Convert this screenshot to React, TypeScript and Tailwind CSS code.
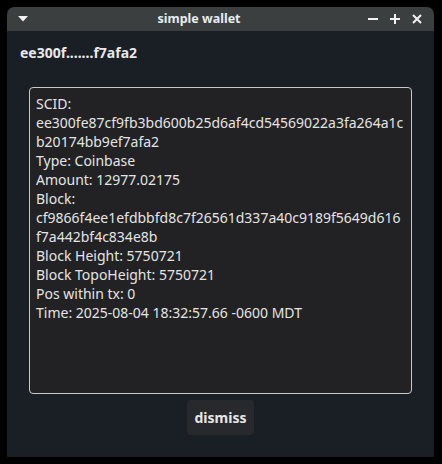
import React from "react";

const lines = [
  "SCID:",
  "ee300fe87cf9fb3bd600b25d6af4cd54569022a3fa264a1c",
  "b20174bb9ef7afa2",
  "Type: Coinbase",
  "Amount: 12977.02175",
  "Block:",
  "cf9866f4ee1efdbbfd8c7f26561d337a40c9189f5649d616",
  "f7a442bf4c834e8b",
  "Block Height: 5750721",
  "Block TopoHeight: 5750721",
  "Pos within tx: 0",
  "Time: 2025-08-04 18:32:57.66 -0600 MDT",
];

function TitleBar() {
  return (
    <div className="flex h-[24px] items-center rounded-t-[7px] bg-[#3b3f3f] px-[10px] text-[#e6ecf2]">
      <div className="flex w-[14px] items-center pl-[1px]">
        <svg width="10" height="6" viewBox="0 0 10 6">
          <path d="M0 0h10L5 5.5z" fill="#f2f2f2" />
        </svg>
      </div>
      <div className="flex-1 text-center text-[12.5px] font-bold leading-none">
        simple wallet
      </div>
      <div className="flex items-center gap-[10px] pr-[1px]">
        <svg width="12" height="12" viewBox="0 0 12 12">
          <path d="M1 6h10" stroke="#f2f2f2" strokeWidth="2" />
        </svg>
        <svg width="12" height="12" viewBox="0 0 12 12">
          <path d="M1 6h10M6 1v10" stroke="#f2f2f2" strokeWidth="2" />
        </svg>
        <svg width="12" height="12" viewBox="0 0 12 12">
          <path d="M2 2l8 8M10 2l-8 8" stroke="#f2f2f2" strokeWidth="2" />
        </svg>
      </div>
    </div>
  );
}

export default function App() {
  return (
    <div
      className="h-[464px] w-[442px] bg-black pt-[7px] pl-[7px] pr-[8px] pb-[7px]"
      style={{ fontFamily: '"Noto Sans", "Open Sans", sans-serif' }}
    >
      <div className="flex h-[450px] flex-col overflow-hidden rounded-t-[7px] bg-[#1a1e25]">
        <TitleBar />
        <div className="px-[13px] pt-[13px] text-[14px] font-bold leading-[18px] text-[#e8e8e8]">
          ee300f.......f7afa2
        </div>
        <div className="mx-[22px] mt-[25px] h-[307px] rounded-[4px] border border-[#c8c8c8] bg-[#222224] px-[6px] pt-[6px]">
          <div className="whitespace-nowrap text-[14px] leading-[19px] text-[#e4e4e4]">
            {lines.map((l) => (
              <div key={l}>{l}</div>
            ))}
          </div>
        </div>
        <div className="mt-[6px] flex justify-center">
          <button className="h-[35px] rounded-[4px] bg-[#28292d] px-[8px] text-[14px] font-bold text-[#e6e6e6]">
            dismiss
          </button>
        </div>
      </div>
    </div>
  );
}
